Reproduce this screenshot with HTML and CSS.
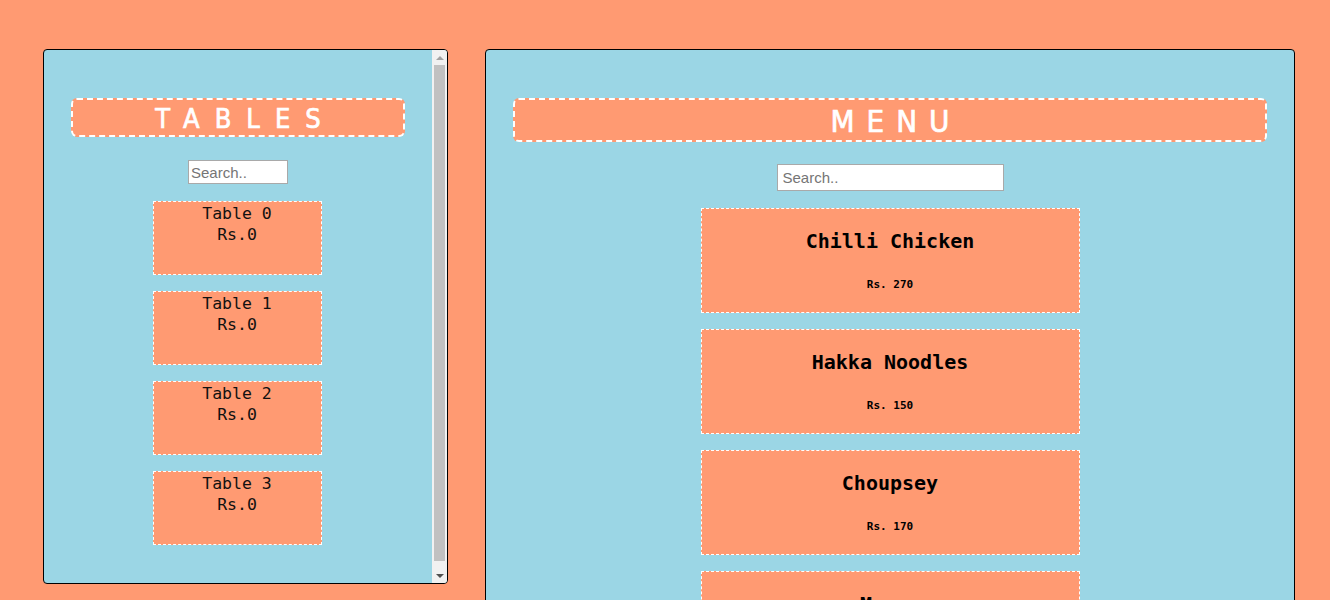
FILE: index.html
```html
<!DOCTYPE html>
<html>
<head>
<meta charset="utf-8">
<link rel="stylesheet" href="styles.css">
</head>
<body>
<div class="page">
  <section class="panel tables-panel">
    <div class="tables-content">
      <h1 class="panel-title tables-title">TABLES</h1>
      <div class="search-row"><input class="search small" type="text" placeholder="Search.."></div>
      <div class="table-list">
        <div class="table-card"><div>Table 0</div><div>Rs.0</div></div>
        <div class="table-card"><div>Table 1</div><div>Rs.0</div></div>
        <div class="table-card"><div>Table 2</div><div>Rs.0</div></div>
        <div class="table-card"><div>Table 3</div><div>Rs.0</div></div>
      </div>
    </div>
    <div class="scrollbar">
      <div class="sb-btn"><span class="arrow up"></span></div>
      <div class="sb-thumb"></div>
      <div class="sb-btn"><span class="arrow down"></span></div>
    </div>
  </section>
  <section class="panel menu-panel">
    <h1 class="panel-title menu-title">MENU</h1>
    <div class="search-row"><input class="search large" type="text" placeholder="Search.."></div>
    <div class="menu-list">
      <div class="menu-card"><h2>Chilli Chicken</h2><p>Rs. 270</p></div>
      <div class="menu-card"><h2>Hakka Noodles</h2><p>Rs. 150</p></div>
      <div class="menu-card"><h2>Choupsey</h2><p>Rs. 170</p></div>
      <div class="menu-card"><h2>Momos</h2><p>Rs. 100</p></div>
    </div>
  </section>
</div>
</body>
</html>
```
FILE: styles.css
```css
html, body {
  margin: 0;
  padding: 0;
  background: #ff9a72;
  overflow: hidden;
  height: 600px;
}
.page {
  display: flex;
  align-items: flex-start;
  gap: 37px;
  padding: 49px 35px 0 43px;
}
.panel {
  background: #9bd6e5;
  border: 1px solid #000;
  border-radius: 4px;
  box-sizing: border-box;
}
.tables-panel {
  width: 405px;
  height: 535px;
  flex: none;
  display: flex;
  overflow: hidden;
}
.tables-content {
  flex: 1;
  min-width: 0;
}
.scrollbar {
  width: 15px;
  flex: none;
  background: #f1f1f1;
  display: flex;
  flex-direction: column;
}
.sb-btn {
  height: 15px;
  display: flex;
  align-items: center;
  justify-content: center;
}
.sb-thumb {
  flex: 1;
  margin: 0 2px 7px 2px;
  background: #c1c1c1;
}
.arrow {
  width: 0;
  height: 0;
  border-left: 4px solid transparent;
  border-right: 4px solid transparent;
}
.arrow.up { border-bottom: 4px solid #a3a3a3; }
.arrow.down { border-top: 4px solid #505050; }
.menu-panel {
  flex: 1;
  height: 800px;
  overflow: hidden;
}
.panel-title {
  margin: 48px 27px 0;
  border: 2px dashed #fff;
  border-radius: 6px;
  background: #ff9a72;
  color: #fff;
  text-align: center;
  font-family: "DejaVu Sans Condensed", "Roboto", sans-serif;
  font-weight: 400;
  -webkit-text-stroke: 0.7px #fff;
}
.tables-title {
  height: 35px;
  line-height: 37px;
  font-size: 27px;
  letter-spacing: 15px;
  padding-left: 15px;
}
.menu-title {
  height: 40px;
  line-height: 42px;
  font-size: 31px;
  letter-spacing: 12px;
  padding-left: 12px;
}
.search-row {
  display: flex;
  justify-content: center;
}
.tables-panel .search-row { margin-top: 23px; }
.menu-panel .search-row { margin-top: 22px; }
.search {
  box-sizing: border-box;
  border: 1px solid #a9a9a9;
  background: #fff;
  font-family: "Liberation Sans", Arial, sans-serif;
  font-size: 15px;
  padding: 1px 2px;
  margin: 0;
  outline: none;
}
.search::placeholder { color: #757575; }
.search.small { width: 100px; height: 24px; }
.search.large { width: 227px; height: 27px; padding: 2px 5px; }
.table-list {
  display: flex;
  flex-direction: column;
  align-items: center;
  gap: 16px;
  margin-top: 17px;
  padding-right: 2px;
}
.table-card {
  box-sizing: border-box;
  width: 169px;
  height: 74px;
  padding-top: 1px;
  background: #ff9a72;
  border: 1px dashed #fff;
  text-align: center;
  font-family: "DejaVu Sans Mono", monospace;
  font-size: 16.5px;
  line-height: 21px;
  color: #111;
}
.menu-list {
  display: flex;
  flex-direction: column;
  align-items: center;
  gap: 16px;
  margin-top: 17px;
}
.menu-card {
  box-sizing: border-box;
  width: 379px;
  height: 105px;
  background: #ff9a72;
  border: 1px dashed #fff;
  text-align: center;
  font-family: "DejaVu Sans Mono", monospace;
  color: #000;
  padding-top: 20px;
}
.menu-card h2 {
  margin: 0;
  font-size: 20px;
  line-height: 24px;
  font-weight: bold;
}
.menu-card p {
  margin: 25px 0 0;
  font-size: 11px;
  line-height: 13px;
  font-weight: bold;
}
```
